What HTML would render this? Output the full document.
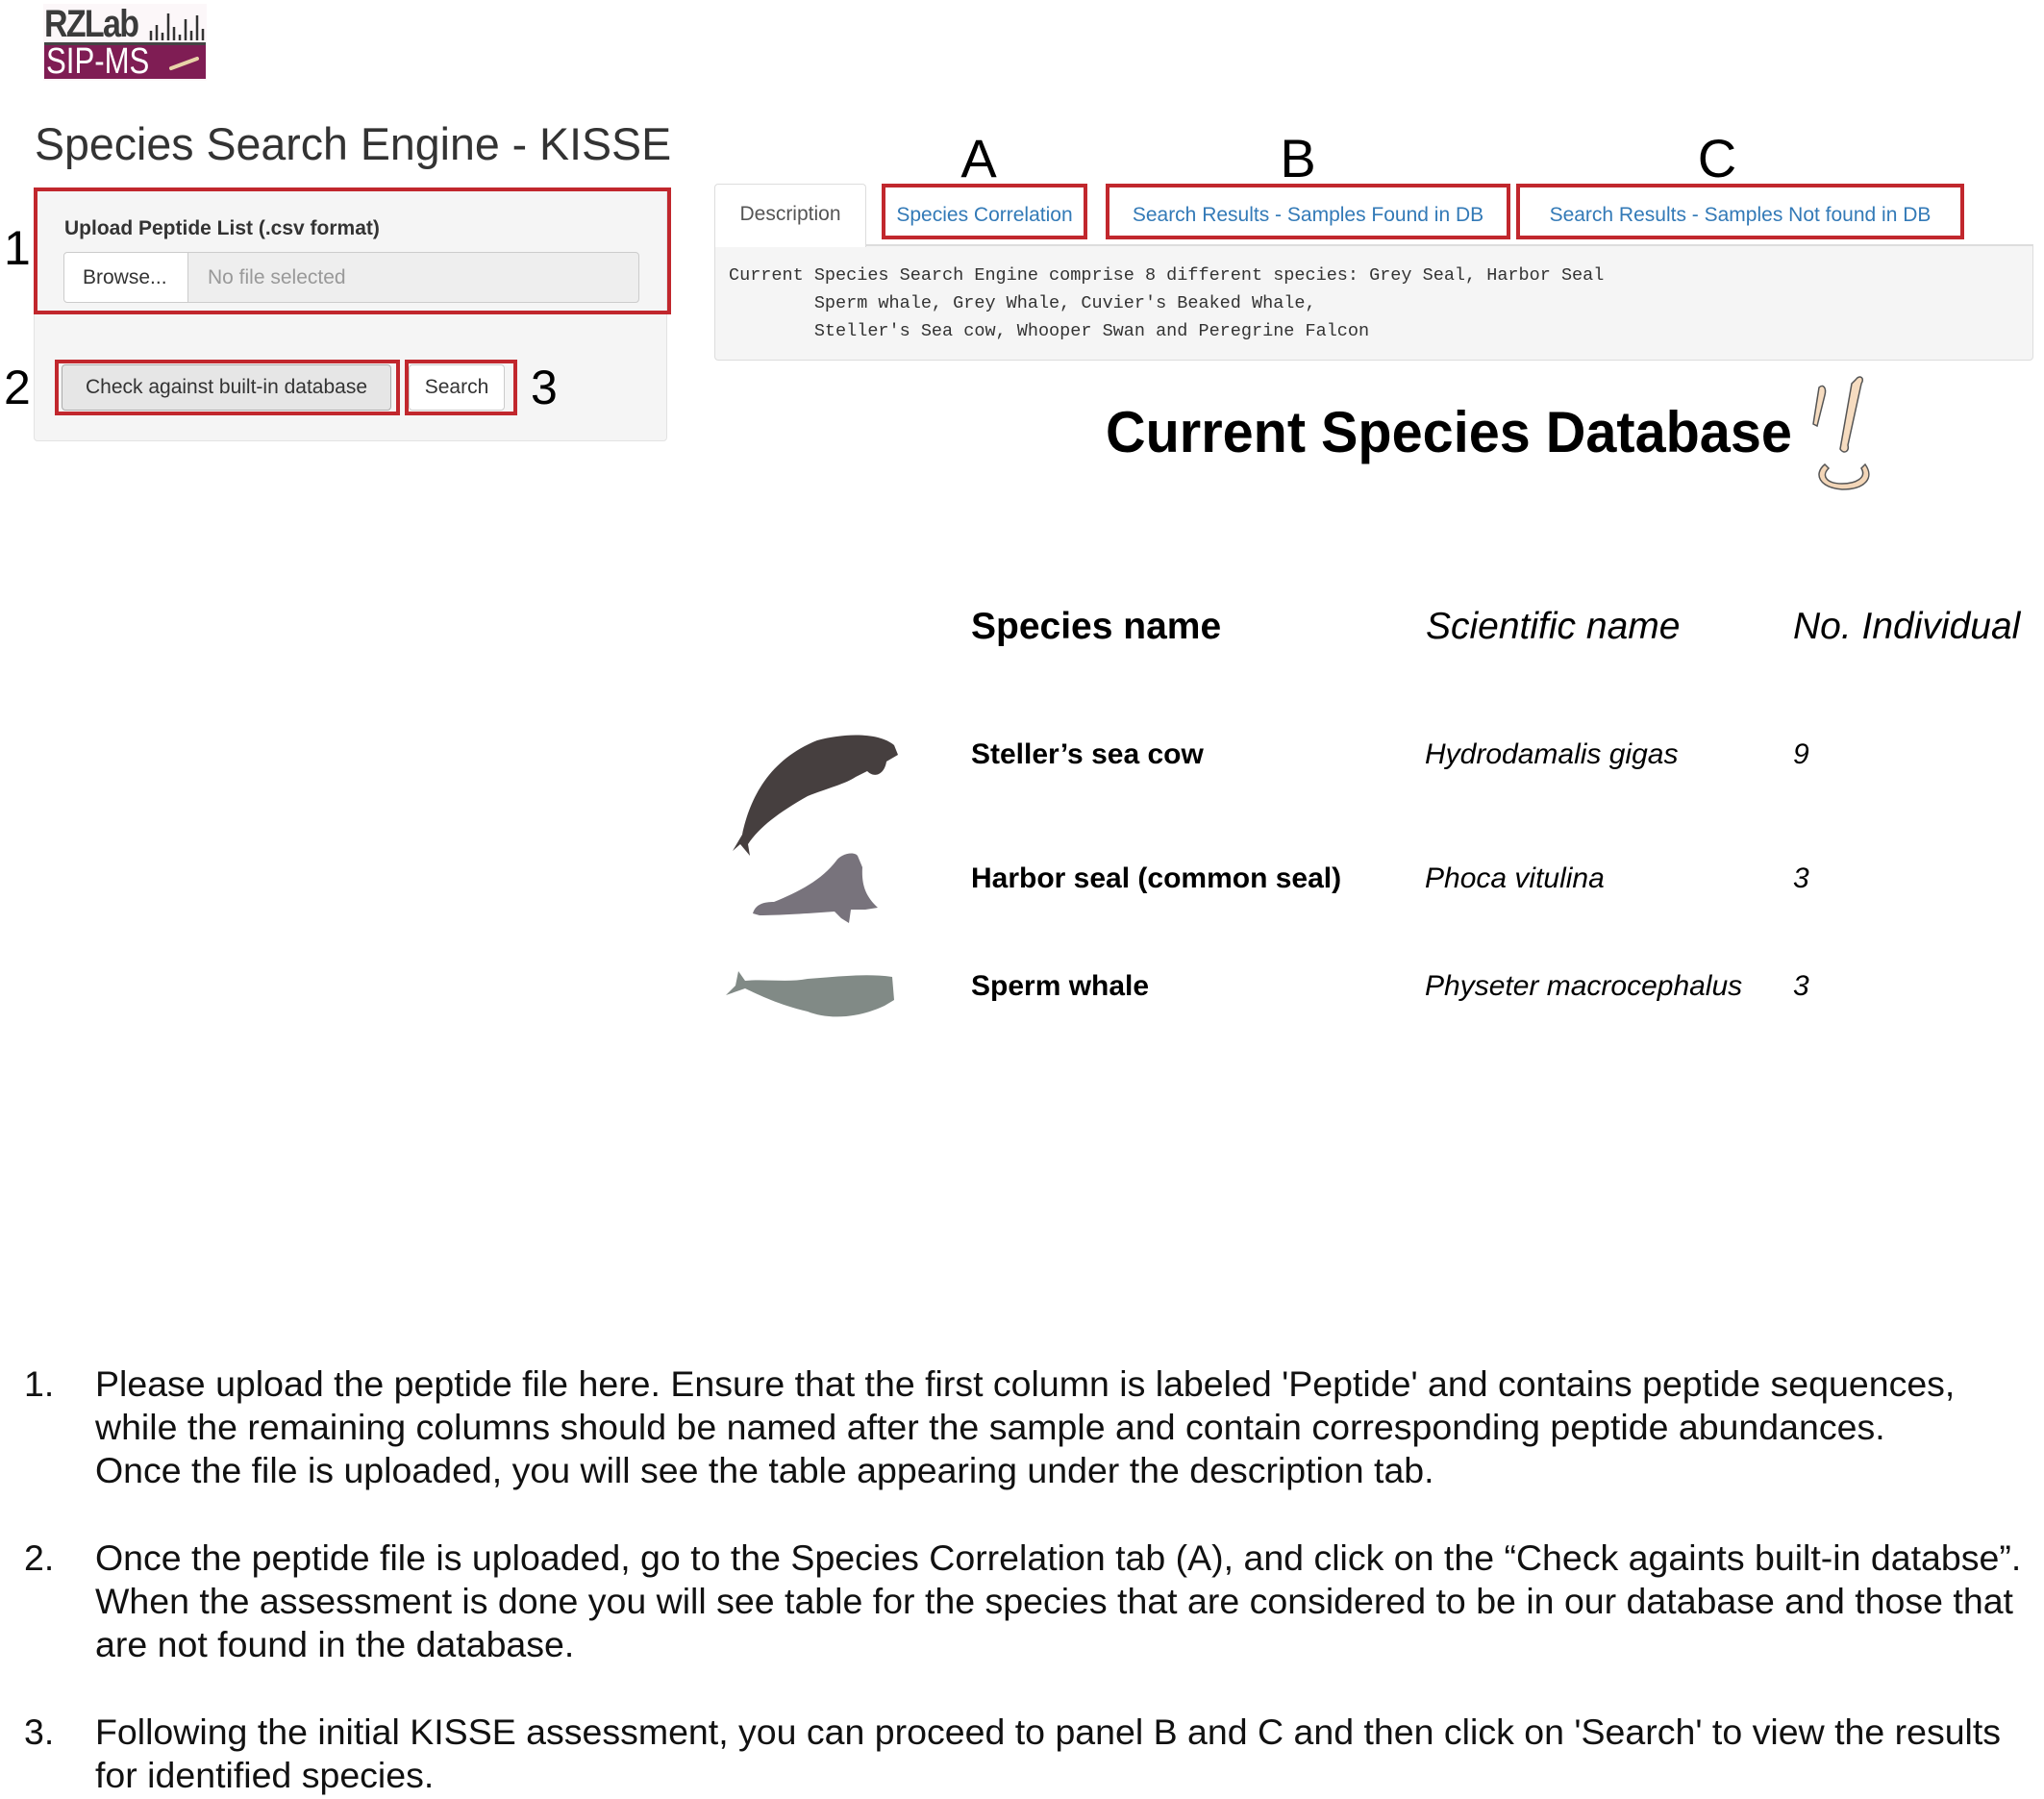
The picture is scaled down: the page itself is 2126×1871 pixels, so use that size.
<!DOCTYPE html>
<html><head><meta charset="utf-8"><style>
*{margin:0;padding:0;box-sizing:border-box}
body{width:2126px;height:1871px;background:#fff;position:relative;overflow:hidden;font-family:"Liberation Sans",Arial,sans-serif;color:#000}
.a{position:absolute;white-space:nowrap}
.red{position:absolute;border:4px solid #c1272d}
.tab{position:absolute;color:#337ab7;font-size:21px;line-height:66px;text-align:center}
.mono{font-family:"Liberation Mono",monospace;font-size:18.5px;color:#333}
.h{font-size:39px;line-height:50px}
.r{font-size:30px;line-height:40px}
.li{font-size:37.5px;line-height:45px;color:#111}
</style></head><body>
<!-- logo -->
<div class="a" style="left:45px;top:4px;width:170px;height:80px;background:#fcf7f9"></div>
<div class="a" style="left:46px;top:3px;font-size:40px;font-weight:bold;color:#3b3b3b;letter-spacing:-2px;line-height:44px;transform:scaleX(0.85);transform-origin:left">RZLab</div>
<svg class="a" style="left:155px;top:8px" width="60" height="36" viewBox="0 0 60 36"><path d="M2,34 V24 M8,34 V18 M14,34 V26 M20,34 V6 M26,34 V20 M32,34 V28 M38,34 V12 M44,34 V24 M50,34 V8 M56,34 V22" stroke="#333" stroke-width="2.5"/></svg>
<div class="a" style="left:46px;top:44px;width:168px;height:3px;background:#444"></div>
<div class="a" style="left:46px;top:47px;width:168px;height:35px;background:#7f1d54"></div>
<div class="a" style="left:48px;top:44px;font-size:38px;color:#fff;line-height:40px;transform:scaleX(0.82);transform-origin:left">SIP-MS</div>
<svg class="a" style="left:175px;top:55px" width="36" height="20"><path d="M3,16 L30,6" stroke="#e8d3a8" stroke-width="4" stroke-linecap="round"/></svg>

<div class="a" style="left:36px;top:122px;font-size:47px;line-height:56px;color:#333;transform:scaleX(0.99);transform-origin:left">Species Search Engine - KISSE</div>

<div class="a" style="left:35px;top:195px;width:659px;height:264px;background:#f5f5f5;border:1px solid #e3e3e3;border-radius:4px"></div>
<div class="red" style="left:35px;top:195px;width:663px;height:132px"></div>
<div class="a" style="left:67px;top:224px;font-size:21px;font-weight:bold;color:#333;line-height:28px">Upload Peptide List (.csv format)</div>
<div class="a" style="left:66px;top:262px;width:130px;height:53px;background:#fff;border:1px solid #ccc;border-radius:4px 0 0 4px;font-size:21px;line-height:51px;color:#333;padding-left:19px">Browse...</div>
<div class="a" style="left:195px;top:262px;width:470px;height:53px;background:#eeeeee;border:1px solid #ccc;border-radius:0 4px 4px 0;font-size:21px;line-height:51px;color:#999;padding-left:20px">No file selected</div>
<div class="a" style="left:4px;top:230px;font-size:50px;line-height:56px">1</div>

<div class="a" style="left:64px;top:379px;width:343px;height:48px;background:#e6e6e6;border:1px solid #adadad;border-radius:4px;font-size:21px;line-height:46px;color:#333;text-align:center">Check against built-in database</div>
<div class="red" style="left:57px;top:374px;width:359px;height:58px"></div>
<div class="a" style="left:425px;top:379px;width:100px;height:48px;background:#fff;border:1px solid #ccc;border-radius:4px;font-size:21px;line-height:46px;color:#333;text-align:center">Search</div>
<div class="red" style="left:421px;top:374px;width:117px;height:58px"></div>
<div class="a" style="left:4px;top:375px;font-size:50px;line-height:56px">2</div>
<div class="a" style="left:552px;top:375px;font-size:50px;line-height:56px">3</div>

<!-- tabs -->
<div class="a" style="left:1018px;top:135px;font-size:56px;line-height:60px;transform:translateX(-50%)">A</div>
<div class="a" style="left:1350px;top:135px;font-size:56px;line-height:60px;transform:translateX(-50%)">B</div>
<div class="a" style="left:1786px;top:135px;font-size:56px;line-height:60px;transform:translateX(-50%)">C</div>
<div class="a" style="left:743px;top:255px;width:1372px;height:120px;background:#f5f5f5;border:1px solid #ddd;border-radius:0 0 4px 4px"></div>
<div class="a" style="left:743px;top:191px;width:158px;height:66px;background:#fff;border:1px solid #ddd;border-bottom:none;border-radius:4px 4px 0 0;font-size:21px;line-height:62px;color:#555;text-align:center">Description</div>
<div class="a" style="left:900px;top:254px;width:1215px;height:2px;background:#ddd"></div>
<div class="tab" style="left:917px;top:191px;width:214px">Species Correlation</div>
<div class="red" style="left:917px;top:191px;width:214px;height:58px"></div>
<div class="tab" style="left:1150px;top:191px;width:421px">Search Results - Samples Found in DB</div>
<div class="red" style="left:1150px;top:191px;width:421px;height:58px"></div>
<div class="tab" style="left:1577px;top:191px;width:466px">Search Results - Samples Not found in DB</div>
<div class="red" style="left:1577px;top:191px;width:466px;height:58px"></div>
<div class="a mono" style="left:758px;top:272px;line-height:29px">Current Species Search Engine comprise 8 different species: Grey Seal, Harbor Seal<br>&nbsp;&nbsp;&nbsp;&nbsp;&nbsp;&nbsp;&nbsp;&nbsp;Sperm whale, Grey Whale, Cuvier's Beaked Whale,<br>&nbsp;&nbsp;&nbsp;&nbsp;&nbsp;&nbsp;&nbsp;&nbsp;Steller's Sea cow, Whooper Swan and Peregrine Falcon</div>

<div class="a" style="left:1150px;top:416px;font-size:60px;font-weight:bold;line-height:68px;transform:scaleX(0.96);transform-origin:left">Current Species Database</div>
<svg class="a" style="left:1878px;top:385px" width="90" height="130" viewBox="0 0 90 130">
<path d="M14,18 C18,14 22,18 20,26 L12,58 L8,56 Z" fill="#f6dcc0" stroke="#555" stroke-width="1.5"/>
<path d="M52,10 C56,4 62,8 58,14 L44,78 C46,84 40,88 36,82 L48,14 Z" fill="#f6dcc0" stroke="#555" stroke-width="1.5"/>
<path d="M20,98 C8,108 14,122 38,124 C62,124 72,112 62,98 L58,102 C64,112 52,118 38,118 C22,118 16,110 24,102 Z" fill="#f3d6b8" stroke="#555" stroke-width="1.5"/>
</svg>

<!-- table -->
<div class="a h" style="left:1010px;top:627px;font-weight:bold">Species name</div>
<div class="a h" style="left:1483px;top:627px;font-style:italic">Scientific name</div>
<div class="a h" style="left:1865px;top:627px;font-style:italic">No. Individual</div>
<div class="a r" style="left:1010px;top:765px;font-weight:bold">Steller’s sea cow</div>
<div class="a r" style="left:1482px;top:765px;font-style:italic">Hydrodamalis gigas</div>
<div class="a r" style="left:1865px;top:765px;font-style:italic">9</div>
<div class="a r" style="left:1010px;top:894px;font-weight:bold">Harbor seal (common seal)</div>
<div class="a r" style="left:1482px;top:894px;font-style:italic">Phoca vitulina</div>
<div class="a r" style="left:1865px;top:894px;font-style:italic">3</div>
<div class="a r" style="left:1010px;top:1006px;font-weight:bold">Sperm whale</div>
<div class="a r" style="left:1482px;top:1006px;font-style:italic">Physeter macrocephalus</div>
<div class="a r" style="left:1865px;top:1006px;font-style:italic">3</div>

<svg class="a" style="left:750px;top:750px" width="200" height="330" viewBox="0 0 200 330">
<path d="M12,135 L22,118 C30,80 50,40 100,20 C130,12 165,12 180,25 L184,35 L172,42 C170,55 160,60 152,52 L140,58 C130,65 110,70 90,78 C60,95 40,110 28,128 L30,140 L20,128 Z" fill="#463f3f"/>
<path d="M33,200 C36,190 45,188 55,188 C80,178 105,165 120,145 C125,138 138,135 142,140 L147,152 C146,170 150,182 163,194 L150,196 L135,196 L133,210 L125,205 L118,198 C90,200 60,202 40,202 Z" fill="#78737c"/>
<path d="M5,285 L15,275 L18,260 L25,270 C45,268 70,272 90,268 C120,266 150,262 178,266 L180,290 L170,296 C140,310 110,310 90,302 C60,295 40,285 25,278 Z" fill="#818a86"/>
</svg>

<!-- list -->
<div class="a li" style="left:25px;top:1417px">1.</div>
<div class="a li" style="left:99px;top:1417px">Please upload the peptide file here. Ensure that the first column is labeled 'Peptide' and contains peptide sequences,<br>while the remaining columns should be named after the sample and contain corresponding peptide abundances.<br>Once the file is uploaded, you will see the table appearing under the description tab.</div>
<div class="a li" style="left:25px;top:1598px">2.</div>
<div class="a li" style="left:99px;top:1598px">Once the peptide file is uploaded, go to the Species Correlation tab (A), and click on the “Check againts built-in databse”.<br>When the assessment is done you will see table for the species that are considered to be in our database and those that<br>are not found in the database.</div>
<div class="a li" style="left:25px;top:1779px">3.</div>
<div class="a li" style="left:99px;top:1779px">Following the initial KISSE assessment, you can proceed to panel B and C and then click on 'Search' to view the results<br>for identified species.</div>
</body></html>
